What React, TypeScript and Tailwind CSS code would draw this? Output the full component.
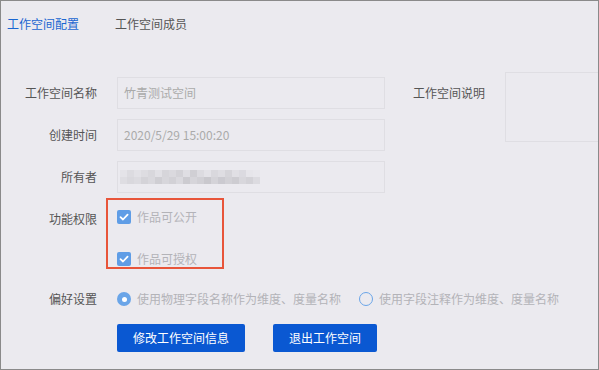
import React from 'react';

const font = { fontFamily: '"Noto Sans CJK SC", "Noto Sans", sans-serif' };

// 打码区域的灰度块（两行）
const mosaic = [
  ['#e4e3e8', '#dcdbe0', '#e2e1e6', '#dddce1', '#d8d7dc', '#e1e0e5', '#d6d5da', '#dad9de', '#d3d2d7', '#dfdee3', '#d0cfd4', '#dcdbe0', '#e3e2e7', '#d9d8dd', '#dedde2', '#d5d4d9', '#e0dfe4', '#dbdae0', '#e6e5ea', '#e8e7ec'],
  ['#dedde2', '#d9d8dd', '#dcdbe0', '#d4d3d8', '#d9d8dd', '#cfced3', '#d7d6db', '#d2d1d6', '#dad9de', '#cccbd0', '#d6d5da', '#d1d0d5', '#c9c8cd', '#d4d3d8', '#cbcad0', '#d2d1d6', '#cdccd1', '#d8d7dc', '#d3d2d7', '#dcdbe0'],
];

const Label = ({ children }: { children: React.ReactNode }) => (
  <div className="w-[96px] shrink-0 text-right text-[12px] text-[#555]">{children}</div>
);

const Checkbox = ({ label }: { label: string }) => (
  <div className="flex items-center">
    <span className="w-[14px] h-[14px] rounded-[2px] bg-[#5f9de6] flex items-center justify-center">
      <svg width="10" height="10" viewBox="0 0 10 10" fill="none">
        <path d="M1.5 5.2 L4 7.5 L8.6 2.6" stroke="white" strokeWidth="1.8" strokeLinecap="round" strokeLinejoin="round" />
      </svg>
    </span>
    <span className="ml-[6px] text-[12px] text-[#b3b3b8]">{label}</span>
  </div>
);

const Radio = ({ checked, label }: { checked?: boolean; label: string }) => (
  <div className="flex items-center">
    {checked ? (
      <span className="w-[14px] h-[14px] rounded-full bg-[#6aa5e8] flex items-center justify-center">
        <span className="w-[5px] h-[5px] rounded-full bg-white" />
      </span>
    ) : (
      <span className="w-[14px] h-[14px] rounded-full border border-[#6aa5e8]" />
    )}
    <span className="ml-[6px] text-[12px] text-[#b3b3b8]">{label}</span>
  </div>
);

export default function App() {
  return (
    <div style={font} className="w-[599px] h-[370px] border border-[#8a8a8a] bg-[#ebeaef] overflow-hidden">
      {/* 标签页 */}
      <div className="flex h-[47px] items-center pl-[6px] pb-[1px] text-[12px]">
        <span className="text-[#1a66d1]">工作空间配置</span>
        <span className="ml-[36px] text-[#555]">工作空间成员</span>
      </div>

      <div className="mt-[24px] flex items-start">
        <div className="pt-[5px] flex flex-col gap-[10px] shrink-0">
          <div className="flex items-center">
            <Label>工作空间名称</Label>
            <div className="ml-[20px] w-[268px] h-[32px] border border-[#dfdee3] flex items-center px-[6px] text-[12px] text-[#aaa]">
              竹青测试空间
            </div>
          </div>
          <div className="flex items-center">
            <Label>创建时间</Label>
            <div className="ml-[20px] w-[268px] h-[32px] border border-[#dfdee3] flex items-center px-[6px] text-[12px] text-[#aaa]">
              2020/5/29 15:00:20
            </div>
          </div>
          <div className="flex items-center">
            <Label>所有者</Label>
            <div className="ml-[20px] w-[268px] h-[32px] border border-[#dfdee3] flex items-center px-[2px]">
              <div className="flex flex-col">
                {mosaic.map((row, i) => (
                  <div key={i} className="flex">
                    {row.map((c, j) => (
                      <span key={j} className="w-[7px] h-[7px]" style={{ backgroundColor: c }} />
                    ))}
                  </div>
                ))}
              </div>
            </div>
          </div>
        </div>

        <div className="mt-[5px] h-[32px] w-[100px] shrink-0 flex items-center justify-end text-[12px] text-[#555]">
          工作空间说明
        </div>
        <div className="ml-[20px] w-[100px] h-[70px] shrink-0 border border-[#dfdee3]" />
      </div>

      {/* 功能权限 */}
      <div className="mt-[6px] flex items-start">
        <div className="pt-[11px]">
          <Label>功能权限</Label>
        </div>
        <div className="relative ml-[20px] pt-[9px] flex flex-col gap-[24px]">
          <Checkbox label="作品可公开" />
          <Checkbox label="作品可授权" />
          <div className="absolute left-[-11px] top-[-1px] w-[118px] h-[71px] border-2 border-[#e8553a]" />
        </div>
      </div>

      {/* 偏好设置 */}
      <div className="mt-[22px] flex items-center">
        <Label>偏好设置</Label>
        <div className="ml-[20px] flex items-center gap-[18px]">
          <Radio checked label="使用物理字段名称作为维度、度量名称" />
          <Radio label="使用字段注释作为维度、度量名称" />
        </div>
      </div>

      <div className="mt-[16px] ml-[116px] flex gap-[28px]">
        <button className="w-[128px] h-[28px] rounded-[2px] bg-[#0a58d2] text-white text-[12px]">修改工作空间信息</button>
        <button className="w-[104px] h-[28px] rounded-[2px] bg-[#0a58d2] text-white text-[12px]">退出工作空间</button>
      </div>
    </div>
  );
}
